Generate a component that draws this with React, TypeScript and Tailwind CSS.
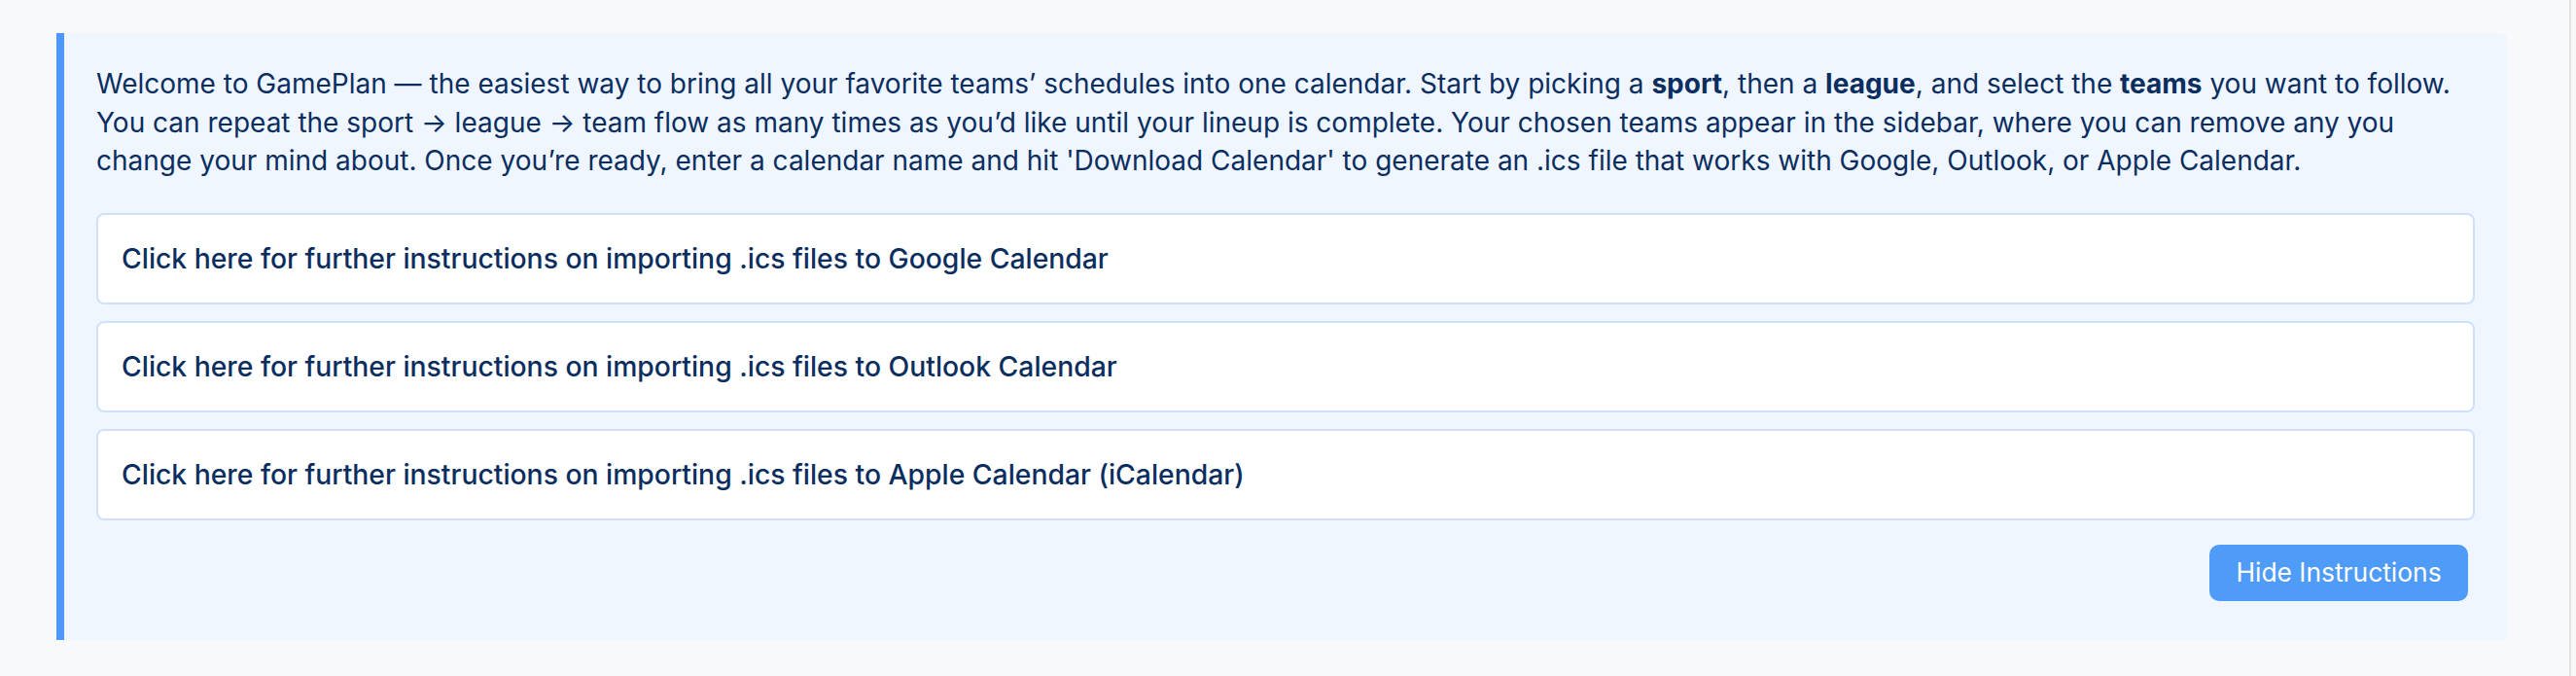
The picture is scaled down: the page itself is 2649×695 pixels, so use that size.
import React from 'react';

const guides = [
  'Click here for further instructions on importing .ics files to Google Calendar',
  'Click here for further instructions on importing .ics files to Outlook Calendar',
  'Click here for further instructions on importing .ics files to Apple Calendar (iCalendar)',
];

export default function App() {
  return (
    <div
      className="flex min-h-screen bg-[#f8f9fa]"
      style={{ fontFamily: 'Inter, "Noto Sans", sans-serif' }}
    >
      <div className="flex-1 pt-[34px] pl-[58px] pr-[64px]">
        <div className="rounded-r-md border-l-[8px] border-[#4f98fb] bg-[#eff6ff] px-[33px] pt-[33px] pb-[40px]">
          <p className="mb-[33px] whitespace-nowrap text-[28px] leading-[39.6px] text-[#0b2e5f]">
            Welcome to GamePlan — the easiest way to bring all your favorite teams’ schedules into one calendar. Start by
            picking a <strong className="font-bold">sport</strong>, then a <strong className="font-bold">league</strong>, and
            select the <strong className="font-bold">teams</strong> you want to follow.
            <br />
            You can repeat the sport → league → team flow as many times as you’d like until your lineup is complete. Your
            chosen teams appear in the sidebar, where you can remove any you
            <br />
            change your mind about. Once you’re ready, enter a calendar name and hit 'Download Calendar' to generate an .ics
            file that works with Google, Outlook, or Apple Calendar.
          </p>

          <div className="flex flex-col gap-[17px]">
            {guides.map((g) => (
              <div
                key={g}
                className="flex h-[94px] cursor-pointer items-center rounded-[8px] border-2 border-[#cfe0fc] bg-white px-[24px] text-[28.3px] font-medium text-[#0b2e5f]"
              >
                {g}
              </div>
            ))}
          </div>

          <div className="mt-[25px] flex justify-end pr-[7px]">
            <button className="flex h-[58px] w-[266px] items-center justify-center rounded-[10px] bg-[#4f9bf8] text-[26.4px] text-white">
              Hide Instructions
            </button>
          </div>
        </div>
      </div>
      <div className="w-[7px] border-l-2 border-[#e3e3e3] bg-[#f8f8f8]" />
    </div>
  );
}
